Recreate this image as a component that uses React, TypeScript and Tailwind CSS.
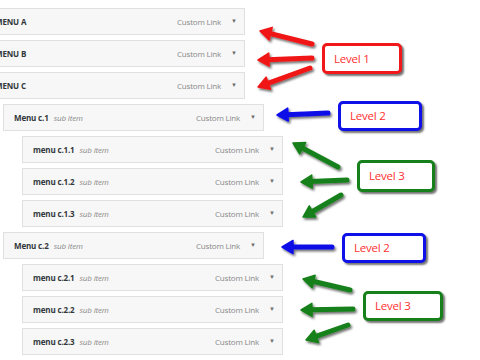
import React from "react";

type Item = { title: string; sub?: boolean; level: 1 | 2 | 3 };

const items: Item[] = [
  { title: "MENU A", level: 1 },
  { title: "MENU B", level: 1 },
  { title: "MENU C", level: 1 },
  { title: "Menu c.1", sub: true, level: 2 },
  { title: "menu c.1.1", sub: true, level: 3 },
  { title: "menu c.1.2", sub: true, level: 3 },
  { title: "menu c.1.3", sub: true, level: 3 },
  { title: "Menu c.2", sub: true, level: 2 },
  { title: "menu c.2.1", sub: true, level: 3 },
  { title: "menu c.2.2", sub: true, level: 3 },
  { title: "menu c.2.3", sub: true, level: 3 },
];

const indent = {
  1: "ml-[-16px]",
  2: "ml-[3px]",
  3: "ml-[22px]",
};

const MenuItem = ({ item }: { item: Item }) => (
  <div
    className={`${indent[item.level]} flex h-[27px] w-[261px] shrink-0 items-center border border-[#e0e0e0] bg-[#f7f7f7] pl-[10px] pr-[7px]`}
  >
    <span className="text-[8px] font-bold tracking-[-0.15px] text-[#32373c]">{item.title}</span>
    {item.sub && (
      <span className="ml-[5px] text-[8px] italic tracking-[-0.15px] text-[#8a8a8a]">sub item</span>
    )}
    <span className="ml-auto text-[8px] tracking-[-0.2px] text-[#888888]">Custom Link</span>
    <span className="ml-[10px] text-[6px] text-[#6f6f6f]">▼</span>
  </div>
);

type Arrow = { x1: number; y1: number; x2: number; y2: number; c: string };

const arrows: Arrow[] = [
  { x1: 312, y1: 44, x2: 260, y2: 31, c: "#f01818" },
  { x1: 312, y1: 58, x2: 258, y2: 60, c: "#f01818" },
  { x1: 310, y1: 68, x2: 258, y2: 87, c: "#f01818" },
  { x1: 328, y1: 113, x2: 277, y2: 115, c: "#1010e8" },
  { x1: 338, y1: 167, x2: 293, y2: 143, c: "#16801a" },
  { x1: 347, y1: 180, x2: 301, y2: 182, c: "#16801a" },
  { x1: 341, y1: 195, x2: 303, y2: 217, c: "#16801a" },
  { x1: 332, y1: 247, x2: 282, y2: 247, c: "#1010e8" },
  { x1: 350, y1: 290, x2: 303, y2: 279, c: "#16801a" },
  { x1: 353, y1: 309, x2: 301, y2: 310, c: "#16801a" },
  { x1: 348, y1: 325, x2: 306, y2: 340, c: "#16801a" },
];

const ArrowShape = ({ a }: { a: Arrow }) => {
  const dx = a.x2 - a.x1;
  const dy = a.y2 - a.y1;
  const len = Math.hypot(dx, dy);
  const ux = dx / len;
  const uy = dy / len;
  const px = -uy;
  const py = ux;
  const headLen = 11;
  const headW = 6.5;
  const bx = a.x2 - ux * headLen;
  const by = a.y2 - uy * headLen;
  const pts = `${a.x2},${a.y2} ${bx + px * headW},${by + py * headW} ${bx - px * headW},${by - py * headW}`;
  return (
    <g filter="url(#shadow)">
      <line
        x1={a.x1}
        y1={a.y1}
        x2={bx + ux * 2}
        y2={by + uy * 2}
        stroke={a.c}
        strokeWidth={5}
        strokeLinecap="round"
      />
      <polygon points={pts} fill={a.c} stroke={a.c} strokeWidth={1.5} strokeLinejoin="round" />
    </g>
  );
};

const labels = [
  { text: "Level 1", cls: "left-[322px] top-[43px] w-[80px] h-[31px] border-[#f01818]" },
  { text: "Level 2", cls: "left-[338px] top-[101px] w-[84px] h-[30px] border-[#1010e8]" },
  { text: "Level 3", cls: "left-[357px] top-[160px] w-[78px] h-[32px] border-[#16801a]" },
  { text: "Level 2", cls: "left-[342px] top-[233px] w-[84px] h-[30px] border-[#1010e8]" },
  { text: "Level 3", cls: "left-[363px] top-[291px] w-[80px] h-[30px] border-[#16801a]" },
];

export default function App() {
  return (
    <div className="relative h-[360px] w-[480px] overflow-hidden bg-white font-['Open_Sans',sans-serif]">
      <div className="flex flex-col gap-[5px] pt-[8px]">
        {items.map((item) => (
          <MenuItem key={item.title} item={item} />
        ))}
      </div>

      <svg className="absolute left-0 top-0" width={480} height={360}>
        <defs>
          <filter id="shadow" x="-20%" y="-50%" width="140%" height="200%">
            <feDropShadow dx="1.5" dy="2" stdDeviation="1" floodColor="#000" floodOpacity="0.55" />
          </filter>
        </defs>
        {arrows.map((a, i) => (
          <ArrowShape key={i} a={a} />
        ))}
      </svg>

      {labels.map((l, i) => (
        <div
          key={i}
          className={`absolute ${l.cls} flex items-center rounded-[5px] border-[3px] bg-white pl-[9px] shadow-[2px_2px_2px_rgba(0,0,0,0.55)]`}
        >
          <span className="text-[11.5px] tracking-[-0.2px] text-[#ff3030]">{l.text}</span>
        </div>
      ))}
    </div>
  );
}
